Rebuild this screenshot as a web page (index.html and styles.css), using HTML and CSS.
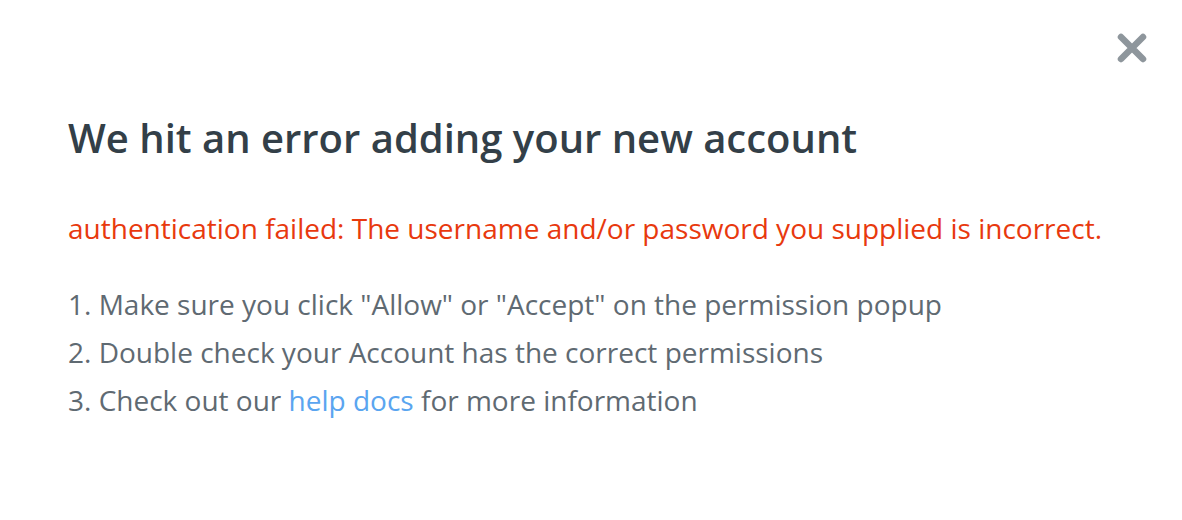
FILE: index.html
```html
<!DOCTYPE html>
<html>
<head>
<meta charset="utf-8">
<link rel="stylesheet" href="styles.css">
</head>
<body>
<div class="modal">
  <button class="close" aria-label="Close">
    <svg width="32" height="32" viewBox="0 0 32 32"><path d="M5 5 L27 27 M27 5 L5 27" stroke="#8e969c" stroke-width="6.5" stroke-linecap="round" fill="none"/></svg>
  </button>
  <h1 class="title">We hit an error adding your new account</h1>
  <p class="error">authentication failed: The username and/or password you supplied is incorrect.</p>
  <ol class="steps">
    <li>1. Make sure you click "Allow" or "Accept" on the permission popup</li>
    <li>2. Double check your Account has the correct permissions</li>
    <li>3. Check out our <a href="#" class="link">help docs</a> for more information</li>
  </ol>
</div>
</body>
</html>
```
FILE: styles.css
```css
html, body { margin: 0; padding: 0; background: #fff; }
body { font-family: "Open Sans", sans-serif; }
.modal { position: relative; width: 1182px; height: 520px; box-sizing: border-box; padding: 110px 68px 0 68px; }
.close { position: absolute; top: 32px; right: 34px; background: none; border: 0; padding: 0; width: 32px; height: 32px; cursor: pointer; }
.close svg { display: block; }
.title { margin: 0; font-size: 40px; font-weight: 600; color: #333f48; line-height: 56px; }
.error { margin: 42px 0 0 0; font-size: 28px; color: #e8390e; line-height: 40px; }
.steps { list-style: none; margin: 32px 0 0 0; padding: 0; font-size: 28px; color: #5f6a72; line-height: 48px; }
.link { color: #5aa5f0; text-decoration: none; }
```
